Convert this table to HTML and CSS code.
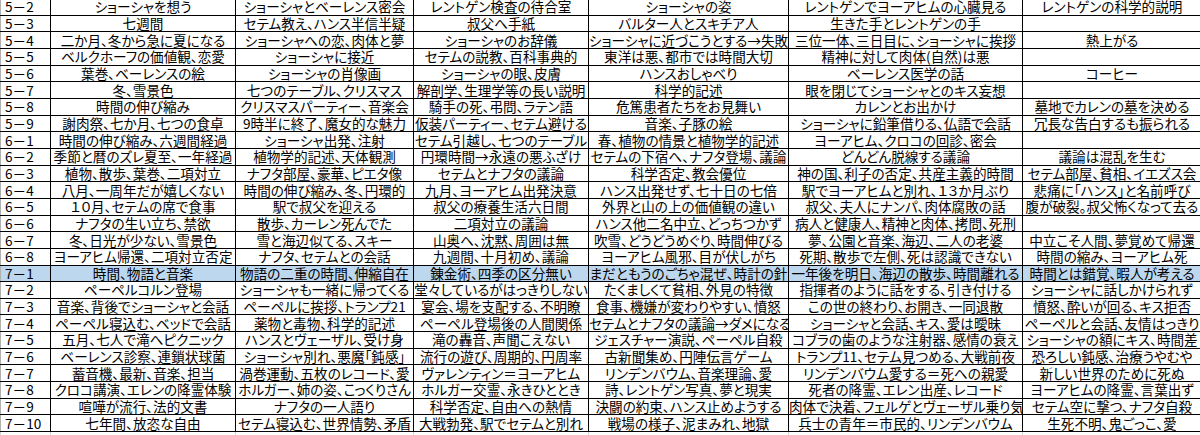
FILE: index.html
```html
<!DOCTYPE html>
<html lang="ja">
<head>
<meta charset="utf-8">
<title>魔の山 章立て</title>
<link rel="stylesheet" href="styles.css">
</head>
<body>
<table class="sheet">
<colgroup>
<col class="c-a"><col class="c-b"><col class="c-c"><col class="c-d"><col class="c-e"><col class="c-f"><col class="c-g">
</colgroup>
<tbody>
<tr><td class="no">5－2</td><td>ショーシャを想う</td><td>ショーシャとベーレンス密会</td><td>レントゲン検査の待合室</td><td>ショーシャの姿</td><td>レントゲンでヨーアヒムの心臓見る</td><td>レントゲンの科学的説明</td></tr>
<tr><td class="no">5－3</td><td>七週間</td><td>セテム教え、ハンス半信半疑</td><td>叔父へ手紙</td><td>バルター人とスキチア人</td><td>生きた手とレントゲンの手</td><td></td></tr>
<tr><td class="no">5－4</td><td>二か月、冬から急に夏になる</td><td>ショーシャへの恋、肉体と夢</td><td>ショーシャのお辞儀</td><td>ショーシャに近づこうとする→失敗</td><td>三位一体、三日目に、ショーシャに挨拶</td><td>熱上がる</td></tr>
<tr><td class="no">5－5</td><td>ベルクホーフの価値観、恋愛</td><td>ショーシャに接近</td><td>セテムの説教、百科事典的</td><td>東洋は悪、都市では時間大切</td><td>精神に対して肉体(自然)は悪</td><td></td></tr>
<tr><td class="no">5－6</td><td>葉巻、ベーレンスの絵</td><td>ショーシャの肖像画</td><td>ショーシャの眼、皮膚</td><td>ハンスおしゃべり</td><td>ベーレンス医学の話</td><td>コーヒー</td></tr>
<tr><td class="no">5－7</td><td>冬、雪景色</td><td>七つのテーブル、クリスマス</td><td>解剖学、生理学等の長い説明</td><td>科学的記述</td><td>眼を閉じてショーシャとのキス妄想</td><td></td></tr>
<tr><td class="no">5－8</td><td>時間の伸び縮み</td><td>クリスマスパーティー、音楽会</td><td>騎手の死、弔問、ラテン語</td><td>危篤患者たちをお見舞い</td><td>カレンとお出かけ</td><td>墓地でカレンの墓を決める</td></tr>
<tr><td class="no">5－9</td><td>謝肉祭、七か月、七つの食卓</td><td>9時半に終了、魔女的な魅力</td><td>仮装パーティー、セテム避ける</td><td>音楽、子豚の絵</td><td>ショーシャに鉛筆借りる、仏語で会話</td><td>冗長な告白するも振られる</td></tr>
<tr><td class="no">6－1</td><td>時間の伸び縮み、六週間経過</td><td>ショーシャ出発、注射</td><td>セテム引越し、七つのテーブル</td><td>春、植物の情景と植物学的記述</td><td>ヨーアヒム、クロコの回診、密会</td><td></td></tr>
<tr><td class="no">6－2</td><td>季節と暦のズレ夏至、一年経過</td><td>植物学的記述、天体観測</td><td>円環時間→永遠の悪ふざけ</td><td>セテムの下宿へ、ナフタ登場、議論</td><td>どんどん脱線する議論</td><td>議論は混乱を生む</td></tr>
<tr><td class="no">6－3</td><td>植物、散歩、葉巻、二項対立</td><td>ナフタ部屋、豪華、ピエタ像</td><td>セテムとナフタの議論</td><td>科学否定、教会優位</td><td>神の国、利子の否定、共産主義的時間</td><td>セテム部屋、貧相、イエズス会</td></tr>
<tr><td class="no">6－4</td><td>八月、一周年だが嬉しくない</td><td>時間の伸び縮み、冬、円環的</td><td>九月、ヨーアヒム出発決意</td><td>ハンス出発せず、七十日の七倍</td><td>駅でヨーアヒムと別れ、１３か月ぶり</td><td>悲痛に「ハンス」と名前呼び</td></tr>
<tr><td class="no">6－5</td><td>１０月、セテムの席で食事</td><td>駅で叔父を迎える</td><td>叔父の療養生活六日間</td><td>外界と山の上の価値観の違い</td><td>叔父、夫人にナンパ、肉体腐敗の話</td><td>腹が破裂。叔父怖くなって去る</td></tr>
<tr><td class="no">6－6</td><td>ナフタの生い立ち、禁欲</td><td>散歩、カーレン死んでた</td><td>二項対立の議論</td><td>ハンス他二名中立、どっちつかず</td><td>病人と健康人、精神と肉体、拷問、死刑</td><td></td></tr>
<tr><td class="no">6－7</td><td>冬、日光が少ない、雪景色</td><td>雪と海辺似てる、スキー</td><td>山奥へ、沈黙、周囲は無</td><td>吹雪、どうどうめぐり、時間伸びる</td><td>夢、公園と音楽、海辺、二人の老婆</td><td>中立こそ人間、夢覚めて帰還</td></tr>
<tr><td class="no">6－8</td><td>ヨーアヒム帰還、二項対立否定</td><td>ナフタ、セテムとの会話</td><td>九週間、十月初め、議論</td><td>ヨーアヒム風邪、目が伏しがち</td><td>死期、散歩で左側、死は認識できない</td><td>時間の縮み、ヨーアヒム死</td></tr>
<tr class="sel"><td class="no">7－1</td><td>時間、物語と音楽</td><td>物語の二重の時間、伸縮自在</td><td>錬金術、四季の区分無い</td><td>まだともうのごちゃ混ぜ、時計の針</td><td>一年後を明日、海辺の散歩、時間離れる</td><td>時間とは錯覚、暇人が考える</td></tr>
<tr><td class="no">7－2</td><td>ペーペルコルン登場</td><td>ショーシャも一緒に帰ってくる</td><td>堂々しているがはっきりしない</td><td>たくましくて貧相、外見の特徴</td><td>指揮者のように話をする、引き付ける</td><td>ショーシャに話しかけられず</td></tr>
<tr><td class="no">7－3</td><td>音楽、背後でショーシャと会話</td><td>ペーペルに挨拶、トランプ21</td><td>宴会、場を支配する、不明瞭</td><td>食事、機嫌が変わりやすい、憤怒</td><td>この世の終わり、お開き、一同退散</td><td>憤怒、酔いが回る、キス拒否</td></tr>
<tr><td class="no">7－4</td><td>ペーペル寝込む、ベッドで会話</td><td>薬物と毒物、科学的記述</td><td>ペーペル登場後の人間関係</td><td>セテムとナフタの議論→ダメになる</td><td>ショーシャと会話、キス、愛は曖昧</td><td>ペーペルと会話、友情はっきり</td></tr>
<tr><td class="no">7－5</td><td>五月、七人で滝へピクニック</td><td>ハンスとヴェーザル、受け身</td><td>滝の轟音、声聞こえない</td><td>ジェスチャー演説、ペーペル自殺</td><td>コブラの歯のような注射器、感情の衰え</td><td>ショーシャの額にキス、時間差</td></tr>
<tr><td class="no">7－6</td><td>ベーレンス診察、連鎖状球菌</td><td>ショーシャ別れ、悪魔「鈍感」</td><td>流行の遊び、周期的、円周率</td><td>古新聞集め、円陣伝言ゲーム</td><td>トランプ11、セテム見つめる、大戦前夜</td><td>恐ろしい鈍感、治療うやむや</td></tr>
<tr><td class="no">7－7</td><td>蓄音機、最新、音楽、担当</td><td>渦巻運動、五枚のレコード、愛</td><td>ヴァレンティン＝ヨーアヒム</td><td>リンデンバウム、音楽理論、愛</td><td>リンデンバウム愛する＝死への親愛</td><td>新しい世界のために死ぬ</td></tr>
<tr><td class="no">7－8</td><td>クロコ講演、エレンの降霊体験</td><td>ホルガー、姉の姿、こっくりさん</td><td>ホルガー交霊、永きひととき</td><td>詩、レントゲン写真、夢と現実</td><td>死者の降霊、エレン出産、レコード</td><td>ヨーアヒムの降霊、言葉出ず</td></tr>
<tr><td class="no">7－9</td><td>喧嘩が流行、法的文書</td><td>ナフタの一人語り</td><td>科学否定、自由への熱情</td><td>決闘の約束、ハンス止めようする</td><td>肉体で決着、フェルゲとヴェーザル乗り気</td><td>セテム空に撃つ、ナフタ自殺</td></tr>
<tr><td class="no">7－10</td><td>七年間、放恣な自由</td><td>セテム寝込む、世界情勢、矛盾</td><td>大戦勃発、駅でセテムと別れ</td><td>戦場の様子、泥まみれ、地獄</td><td>兵士の青年＝市民的、リンデンバウム</td><td>生死不明、鬼ごっこ、愛</td></tr>
<tr class="blank"><td></td><td></td><td></td><td></td><td></td><td></td><td></td></tr>
</tbody>
</table>
</body>
</html>
```

FILE: styles.css
```css
html, body {
  margin: 0;
  padding: 0;
  background: #ffffff;
  overflow: hidden;
  width: 1200px;
  height: 435px;
}

.sheet {
  margin-top: -2px;
  border-collapse: collapse;
  table-layout: fixed;
  width: 1201px;
  font-family: "Noto Sans CJK JP", "Noto Sans", sans-serif;
  font-feature-settings: "palt";
  font-size: 13.6px;
  color: #000;
}

.c-a { width: 50px; }
.c-b { width: 185px; }
.c-c { width: 178px; }
.c-d { width: 175px; }
.c-e { width: 200px; }
.c-f { width: 234px; }
.c-g { width: 179px; }

.sheet tr {
  height: 16.67px;
}

.sheet td {
  border: 1px solid #000;
  padding: 0;
  height: 15.67px;
  line-height: 15px;
  white-space: nowrap;
  overflow: hidden;
  text-align: center;
  vertical-align: middle;
}

.sheet td.no {
  text-align: left;
  padding-left: 4px;
  border-left-color: #b0b0b0;
}

.sheet tr.sel td {
  background: #bdd7ee;
}

.sheet tr.blank td {
  border-color: #d4d4d4;
  border-top-color: #000;
}
```
